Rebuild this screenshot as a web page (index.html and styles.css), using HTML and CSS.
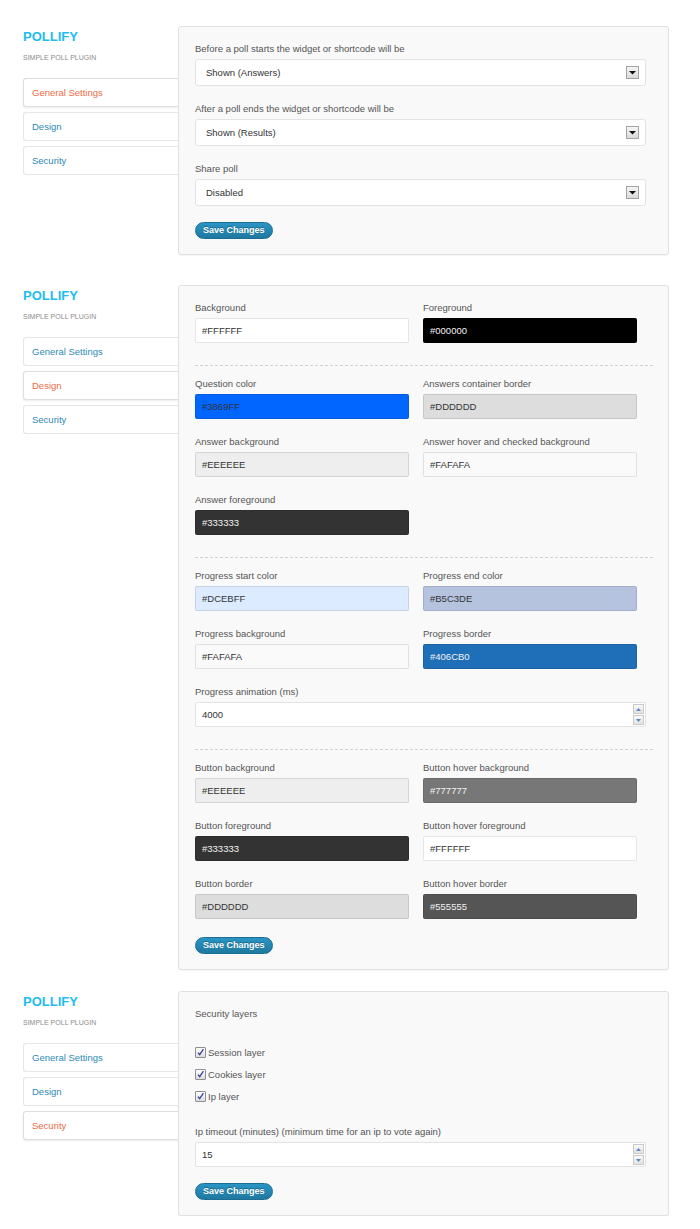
FILE: index.html
```html
<!DOCTYPE html>
<html>
<head>
<meta charset="utf-8">
<title>Pollify settings</title>
<link rel="stylesheet" href="styles.css">
</head>
<body>

<section class="screen screen--general">
  <aside class="sidebar">
    <div class="logo">POLLIFY</div>
    <div class="tagline">SIMPLE POLL PLUGIN</div>
    <nav class="tabs">
      <a class="tab tab--active">General Settings</a>
      <a class="tab">Design</a>
      <a class="tab">Security</a>
    </nav>
  </aside>
  <div class="panel">
    <div class="field field--select">
      <label class="label">Before a poll starts the widget or shortcode will be</label>
      <div class="select"><span>Shown (Answers)</span><span class="select-arrow"><svg width="7" height="5" viewBox="0 0 7 5"><path d="M0 1h7L3.5 4.5z" fill="#111"/></svg></span></div>
    </div>
    <div class="field field--select">
      <label class="label">After a poll ends the widget or shortcode will be</label>
      <div class="select"><span>Shown (Results)</span><span class="select-arrow"><svg width="7" height="5" viewBox="0 0 7 5"><path d="M0 1h7L3.5 4.5z" fill="#111"/></svg></span></div>
    </div>
    <div class="field field--select">
      <label class="label">Share poll</label>
      <div class="select"><span>Disabled</span><span class="select-arrow"><svg width="7" height="5" viewBox="0 0 7 5"><path d="M0 1h7L3.5 4.5z" fill="#111"/></svg></span></div>
    </div>
    <button class="btn">Save Changes</button>
  </div>
</section>

<section class="screen screen--design">
  <aside class="sidebar">
    <div class="logo">POLLIFY</div>
    <div class="tagline">SIMPLE POLL PLUGIN</div>
    <nav class="tabs">
      <a class="tab">General Settings</a>
      <a class="tab tab--active">Design</a>
      <a class="tab">Security</a>
    </nav>
  </aside>
  <div class="panel">
    <div class="group">
      <div class="field"><label class="label">Background</label><div class="swatch" style="background:#FFFFFF">#FFFFFF</div></div>
      <div class="field"><label class="label">Foreground</label><div class="swatch swatch--dark" style="background:#000000">#000000</div></div>
    </div>
    <div class="group">
      <div class="field"><label class="label">Question color</label><div class="swatch" style="background:#0066FF">#3869FF</div></div>
      <div class="field"><label class="label">Answers container border</label><div class="swatch" style="background:#DDDDDD">#DDDDDD</div></div>
      <div class="field"><label class="label">Answer background</label><div class="swatch" style="background:#EEEEEE">#EEEEEE</div></div>
      <div class="field"><label class="label">Answer hover and checked background</label><div class="swatch" style="background:#FAFAFA">#FAFAFA</div></div>
      <div class="field"><label class="label">Answer foreground</label><div class="swatch swatch--dark" style="background:#333333">#333333</div></div>
    </div>
    <div class="group">
      <div class="field"><label class="label">Progress start color</label><div class="swatch" style="background:#DCEBFF">#DCEBFF</div></div>
      <div class="field"><label class="label">Progress end color</label><div class="swatch" style="background:#B5C3DE">#B5C3DE</div></div>
      <div class="field"><label class="label">Progress background</label><div class="swatch" style="background:#FAFAFA">#FAFAFA</div></div>
      <div class="field"><label class="label">Progress border</label><div class="swatch swatch--dark" style="background:#1F6FB8">#406CB0</div></div>
      <div class="field field--wide"><label class="label">Progress animation (ms)</label>
        <div class="number"><span>4000</span>
          <span class="spin">
            <span class="spin-btn"><svg width="5" height="3" viewBox="0 0 5 3"><path d="M0 3h5L2.5 0z" fill="#5f86c4"/></svg></span>
            <span class="spin-btn"><svg width="5" height="3" viewBox="0 0 5 3"><path d="M0 0h5L2.5 3z" fill="#5f86c4"/></svg></span>
          </span>
        </div>
      </div>
    </div>
    <div class="group">
      <div class="field"><label class="label">Button background</label><div class="swatch" style="background:#EEEEEE">#EEEEEE</div></div>
      <div class="field"><label class="label">Button hover background</label><div class="swatch swatch--dark" style="background:#777777">#777777</div></div>
      <div class="field"><label class="label">Button foreground</label><div class="swatch swatch--dark" style="background:#333333">#333333</div></div>
      <div class="field"><label class="label">Button hover foreground</label><div class="swatch" style="background:#FFFFFF">#FFFFFF</div></div>
      <div class="field"><label class="label">Button border</label><div class="swatch" style="background:#DDDDDD">#DDDDDD</div></div>
      <div class="field"><label class="label">Button hover border</label><div class="swatch swatch--dark" style="background:#555555">#555555</div></div>
    </div>
    <button class="btn btn--design">Save Changes</button>
  </div>
</section>

<section class="screen screen--security">
  <aside class="sidebar">
    <div class="logo">POLLIFY</div>
    <div class="tagline">SIMPLE POLL PLUGIN</div>
    <nav class="tabs">
      <a class="tab">General Settings</a>
      <a class="tab">Design</a>
      <a class="tab tab--active">Security</a>
    </nav>
  </aside>
  <div class="panel">
    <div class="label">Security layers</div>
    <div class="checks">
      <label class="check"><span class="checkbox"><svg width="9" height="9" viewBox="0 0 9 9"><path d="M2 4.6L3.7 6.7L7.4 1.2" fill="none" stroke="#34449a" stroke-width="1.3"/></svg></span>Session layer</label>
      <label class="check"><span class="checkbox"><svg width="9" height="9" viewBox="0 0 9 9"><path d="M2 4.6L3.7 6.7L7.4 1.2" fill="none" stroke="#34449a" stroke-width="1.3"/></svg></span>Cookies layer</label>
      <label class="check"><span class="checkbox"><svg width="9" height="9" viewBox="0 0 9 9"><path d="M2 4.6L3.7 6.7L7.4 1.2" fill="none" stroke="#34449a" stroke-width="1.3"/></svg></span>Ip layer</label>
    </div>
    <div class="field field--select">
      <label class="label">Ip timeout (minutes) (minimum time for an ip to vote again)</label>
      <div class="number"><span>15</span>
        <span class="spin">
          <span class="spin-btn"><svg width="5" height="3" viewBox="0 0 5 3"><path d="M0 3h5L2.5 0z" fill="#5f86c4"/></svg></span>
          <span class="spin-btn"><svg width="5" height="3" viewBox="0 0 5 3"><path d="M0 0h5L2.5 3z" fill="#5f86c4"/></svg></span>
        </span>
      </div>
    </div>
    <button class="btn">Save Changes</button>
  </div>
</section>

</body>
</html>
```

FILE: styles.css
```css
* { box-sizing: border-box; }

body {
  margin: 0;
  padding-top: 26px;
  background: #ffffff;
  font-family: "Liberation Sans", Arial, sans-serif;
  font-size: 9.5px;
  color: #555555;
}

.screen {
  display: flex;
  align-items: flex-start;
}

.screen--general { margin-bottom: 30px; }
.screen--design { margin-bottom: 21px; }

/* Sidebar */
.sidebar {
  width: 178px;
  padding-left: 23px;
  padding-top: 3px;
  flex-shrink: 0;
}

.logo {
  font-size: 13px;
  font-weight: bold;
  line-height: 15px;
  color: #1dbdf1;
}

.tagline {
  margin-top: 9px;
  font-size: 7px;
  line-height: 9px;
  color: #8c8c8c;
}

.tabs {
  margin-top: 16px;
  display: flex;
  flex-direction: column;
  gap: 5px;
}

.tab {
  display: block;
  height: 29px;
  line-height: 27px;
  padding-left: 8px;
  background: #ffffff;
  border: 1px solid #e6e6e6;
  border-right: none;
  border-radius: 3px 0 0 3px;
  color: #2e89b6;
  font-size: 9.5px;
  cursor: pointer;
}

.tab--active {
  color: #ee6a44;
  border-color: #dedede;
  box-shadow: 0 1px 2px rgba(0, 0, 0, 0.08);
}

/* Panel */
.panel {
  width: 491px;
  padding: 15px 15px 15px 16px;
  background: #f9f9f9;
  border: 1px solid #e1e1e1;
  border-radius: 3px;
  box-shadow: 0 1px 1px rgba(0, 0, 0, 0.04);
}

.label {
  display: block;
  line-height: 14px;
  margin-bottom: 3px;
  color: #555555;
}

.field { margin-bottom: 16px; }

.select {
  width: 451px;
  height: 27px;
  display: flex;
  align-items: center;
  justify-content: space-between;
  padding: 0 6px 0 10px;
  background: #ffffff;
  border: 1px solid #e3e3e3;
  border-radius: 3px;
  color: #333333;
}

.select-arrow {
  width: 13px;
  height: 13px;
  display: flex;
  align-items: center;
  justify-content: center;
  border: 1px solid #a3a3a3;
  background: linear-gradient(#f6f6f6, #d9d9d9);
}

/* Design grid */
.group {
  display: grid;
  grid-template-columns: 214px 214px;
  column-gap: 14px;
}

.group + .group {
  margin-top: 6px;
  padding-top: 11px;
  border-top: 1px dashed #d3d3d3;
}

.field--wide { grid-column: 1 / -1; }

.swatch {
  width: 214px;
  height: 25px;
  line-height: 23px;
  padding-left: 6px;
  border: 1px solid rgba(0, 0, 0, 0.1);
  border-radius: 2px;
  color: #333333;
}

.swatch--dark { color: #f2f2f2; }

.number {
  width: 451px;
  height: 25px;
  display: flex;
  align-items: center;
  justify-content: space-between;
  padding: 0 1px 0 6px;
  background: #ffffff;
  border: 1px solid #e3e3e3;
  border-radius: 2px;
  color: #333333;
}

.spin {
  display: flex;
  flex-direction: column;
  gap: 1px;
}

.spin-btn {
  width: 11px;
  height: 10px;
  display: flex;
  align-items: center;
  justify-content: center;
  border: 1px solid #cacaca;
  background: linear-gradient(#f9f9f9, #e2e2e2);
}

/* Security */
.checks {
  margin-top: 20px;
  margin-bottom: 18px;
}

.check {
  display: flex;
  align-items: center;
  gap: 2px;
  height: 22px;
  color: #555555;
}

.checkbox {
  width: 11px;
  height: 11px;
  display: flex;
  align-items: center;
  justify-content: center;
  border: 1px solid #8f8f8f;
  border-radius: 1px;
  background: linear-gradient(#ffffff, #dcdcdc);
}

/* Button */
.btn {
  display: block;
  height: 17px;
  margin-top: 0;
  padding: 0 7px;
  border: 1px solid #1b6d94;
  border-radius: 9px;
  background: linear-gradient(#2a95c5, #1f789f);
  color: #ffffff;
  font-family: "Liberation Sans", Arial, sans-serif;
  font-size: 9px;
  font-weight: bold;
  line-height: 15px;
  text-shadow: 0 -1px 0 rgba(0, 0, 0, 0.3);
  cursor: pointer;
}

.btn--design { margin-top: 2px; }
```
